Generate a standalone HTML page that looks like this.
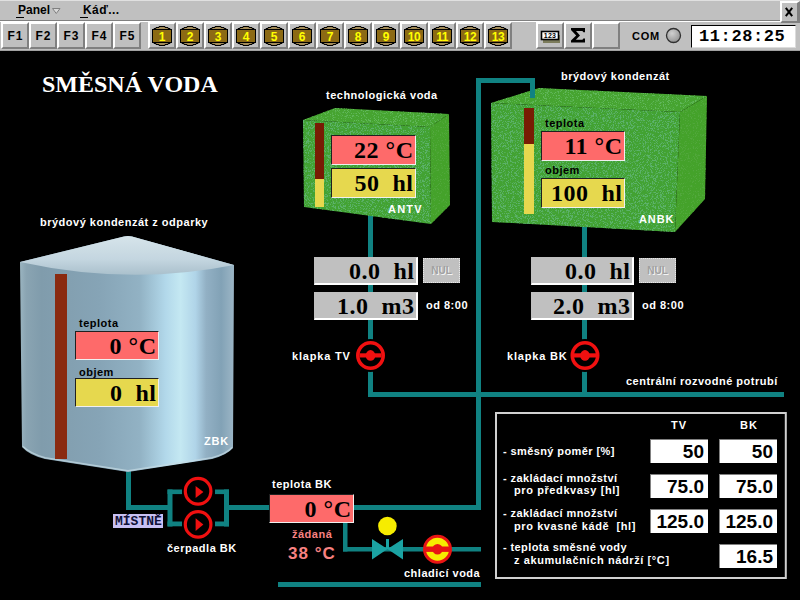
<!DOCTYPE html>
<html><head><meta charset="utf-8">
<style>
*{margin:0;padding:0;box-sizing:border-box}
html,body{width:800px;height:600px;overflow:hidden;background:#000}
body{position:relative;font-family:"Liberation Sans",sans-serif;}
.a{position:absolute}
.menubar{left:0;top:0;width:800px;height:21px;background:#c0c0c0;border-bottom:1px solid #808080;border-top:1px solid #e0e0e0}
.tool{left:0;top:21px;width:800px;height:30px;background:#c0c0c0;border-top:1px solid #fff;border-bottom:1px solid #a0a0a0}
.btn{position:absolute;top:0;height:27px;width:28px;background:#c0c0c0;border-left:2px solid #fff;border-top:2px solid #fff;border-right:2px solid #808080;border-bottom:2px solid #808080;font:bold 12px "Liberation Sans",sans-serif;text-align:center;line-height:25px;color:#000;letter-spacing:1px;text-indent:1px}
.lbl{position:absolute;font:bold 11px "Liberation Sans",sans-serif;color:#fff;white-space:nowrap;line-height:14px;letter-spacing:0.5px}
.blk{color:#000}
.val{position:absolute;font:bold 24px "Liberation Serif",serif;color:#000;white-space:pre;text-align:right;line-height:28px;border-top:1px solid #202020;border-left:1px solid #202020;border-right:1px solid #f0f0f0;border-bottom:1px solid #f0f0f0;padding-right:1.5px;letter-spacing:0.5px}
.gry{line-height:27px}
.red{background:#fe6a6a}
.yel{background:#e6d84e}
.gry{background:#c0c0c0;border-top:1px solid #c0c0c0;border-left:1px solid #c0c0c0;border-right:2px solid #fff;border-bottom:2px solid #fff}
.pipe{position:absolute;background:#108282}
.tb{position:absolute;background:#fff;font:bold 19px "Liberation Sans",sans-serif;color:#000;text-align:right;padding-right:4px;white-space:nowrap;line-height:24px;height:24px;width:58px;border-top:1px solid #808080;border-left:1px solid #808080}
.tl{position:absolute;font:bold 11px "Liberation Sans",sans-serif;color:#fff;white-space:pre;line-height:14px;letter-spacing:0.4px}
</style></head><body>
<!-- menu -->
<div class="a menubar">
  <div class="lbl blk" style="left:18px;top:2px;font-size:12px;letter-spacing:0px">Panel</div>
  <div class="a" style="left:16px;top:16px;width:8px;height:1px;background:#000"></div>
  <svg class="a" style="left:52px;top:7px" width="9" height="7"><path d="M0.5 0.5 H8 L4.25 5.5 Z" fill="#d8d8d8" stroke="#808080" stroke-width="1"/></svg>
  <div class="lbl blk" style="left:83px;top:2px;font-size:12px;letter-spacing:0.4px">Káď...</div>
  <div class="a" style="left:80px;top:16px;width:8px;height:1px;background:#000"></div>
  <div class="a" style="left:780px;top:0;width:20px;height:22px;background:#c0c0c0;border-left:2px solid #fff;border-top:2px solid #fff;border-right:3px solid #808080;border-bottom:2px solid #808080;z-index:3"><svg style="position:absolute;left:2.5px;top:4px" width="10" height="11"><path d="M1.4 1.6 L6.6 8.4 M6.6 1.6 L1.4 8.4" stroke="#000" stroke-width="2" stroke-linecap="square"/></svg></div>
</div>
<div class="a tool">
  <div class="btn" style="left:1px">F1</div>
  <div class="btn" style="left:29px">F2</div>
  <div class="btn" style="left:57px">F3</div>
  <div class="btn" style="left:85px">F4</div>
  <div class="btn" style="left:113px">F5</div>
  <div class="btn" style="left:148px"><svg style="position:absolute;left:0;top:0" width="24" height="24"><path d="M9 2.5 H15 V3.5 H18 V4.5 H20 V5.5 H4 V4.5 H6 V3.5 H9 Z" fill="#a48c58" stroke="#000" stroke-width="1"/><path d="M9 21.5 H15 V20.5 H18 V19.5 H20 V18.5 H4 V19.5 H6 V20.5 H9 Z" fill="#a48c58" stroke="#000" stroke-width="1"/><rect x="2.5" y="5.5" width="19" height="13" fill="#8c6a14" stroke="#000" stroke-width="1"/><text x="12" y="16.5" font-family="Liberation Sans" font-weight="bold" font-size="12" letter-spacing="0" fill="#ffff00" text-anchor="middle">1</text></svg></div>
  <div class="btn" style="left:176px"><svg style="position:absolute;left:0;top:0" width="24" height="24"><path d="M9 2.5 H15 V3.5 H18 V4.5 H20 V5.5 H4 V4.5 H6 V3.5 H9 Z" fill="#a48c58" stroke="#000" stroke-width="1"/><path d="M9 21.5 H15 V20.5 H18 V19.5 H20 V18.5 H4 V19.5 H6 V20.5 H9 Z" fill="#a48c58" stroke="#000" stroke-width="1"/><rect x="2.5" y="5.5" width="19" height="13" fill="#8c6a14" stroke="#000" stroke-width="1"/><text x="12" y="16.5" font-family="Liberation Sans" font-weight="bold" font-size="12" letter-spacing="0" fill="#ffff00" text-anchor="middle">2</text></svg></div>
  <div class="btn" style="left:204px"><svg style="position:absolute;left:0;top:0" width="24" height="24"><path d="M9 2.5 H15 V3.5 H18 V4.5 H20 V5.5 H4 V4.5 H6 V3.5 H9 Z" fill="#a48c58" stroke="#000" stroke-width="1"/><path d="M9 21.5 H15 V20.5 H18 V19.5 H20 V18.5 H4 V19.5 H6 V20.5 H9 Z" fill="#a48c58" stroke="#000" stroke-width="1"/><rect x="2.5" y="5.5" width="19" height="13" fill="#8c6a14" stroke="#000" stroke-width="1"/><text x="12" y="16.5" font-family="Liberation Sans" font-weight="bold" font-size="12" letter-spacing="0" fill="#ffff00" text-anchor="middle">3</text></svg></div>
  <div class="btn" style="left:232px"><svg style="position:absolute;left:0;top:0" width="24" height="24"><path d="M9 2.5 H15 V3.5 H18 V4.5 H20 V5.5 H4 V4.5 H6 V3.5 H9 Z" fill="#a48c58" stroke="#000" stroke-width="1"/><path d="M9 21.5 H15 V20.5 H18 V19.5 H20 V18.5 H4 V19.5 H6 V20.5 H9 Z" fill="#a48c58" stroke="#000" stroke-width="1"/><rect x="2.5" y="5.5" width="19" height="13" fill="#8c6a14" stroke="#000" stroke-width="1"/><text x="12" y="16.5" font-family="Liberation Sans" font-weight="bold" font-size="12" letter-spacing="0" fill="#ffff00" text-anchor="middle">4</text></svg></div>
  <div class="btn" style="left:260px"><svg style="position:absolute;left:0;top:0" width="24" height="24"><path d="M9 2.5 H15 V3.5 H18 V4.5 H20 V5.5 H4 V4.5 H6 V3.5 H9 Z" fill="#a48c58" stroke="#000" stroke-width="1"/><path d="M9 21.5 H15 V20.5 H18 V19.5 H20 V18.5 H4 V19.5 H6 V20.5 H9 Z" fill="#a48c58" stroke="#000" stroke-width="1"/><rect x="2.5" y="5.5" width="19" height="13" fill="#8c6a14" stroke="#000" stroke-width="1"/><text x="12" y="16.5" font-family="Liberation Sans" font-weight="bold" font-size="12" letter-spacing="0" fill="#ffff00" text-anchor="middle">5</text></svg></div>
  <div class="btn" style="left:288px"><svg style="position:absolute;left:0;top:0" width="24" height="24"><path d="M9 2.5 H15 V3.5 H18 V4.5 H20 V5.5 H4 V4.5 H6 V3.5 H9 Z" fill="#a48c58" stroke="#000" stroke-width="1"/><path d="M9 21.5 H15 V20.5 H18 V19.5 H20 V18.5 H4 V19.5 H6 V20.5 H9 Z" fill="#a48c58" stroke="#000" stroke-width="1"/><rect x="2.5" y="5.5" width="19" height="13" fill="#8c6a14" stroke="#000" stroke-width="1"/><text x="12" y="16.5" font-family="Liberation Sans" font-weight="bold" font-size="12" letter-spacing="0" fill="#ffff00" text-anchor="middle">6</text></svg></div>
  <div class="btn" style="left:316px"><svg style="position:absolute;left:0;top:0" width="24" height="24"><path d="M9 2.5 H15 V3.5 H18 V4.5 H20 V5.5 H4 V4.5 H6 V3.5 H9 Z" fill="#a48c58" stroke="#000" stroke-width="1"/><path d="M9 21.5 H15 V20.5 H18 V19.5 H20 V18.5 H4 V19.5 H6 V20.5 H9 Z" fill="#a48c58" stroke="#000" stroke-width="1"/><rect x="2.5" y="5.5" width="19" height="13" fill="#8c6a14" stroke="#000" stroke-width="1"/><text x="12" y="16.5" font-family="Liberation Sans" font-weight="bold" font-size="12" letter-spacing="0" fill="#ffff00" text-anchor="middle">7</text></svg></div>
  <div class="btn" style="left:344px"><svg style="position:absolute;left:0;top:0" width="24" height="24"><path d="M9 2.5 H15 V3.5 H18 V4.5 H20 V5.5 H4 V4.5 H6 V3.5 H9 Z" fill="#a48c58" stroke="#000" stroke-width="1"/><path d="M9 21.5 H15 V20.5 H18 V19.5 H20 V18.5 H4 V19.5 H6 V20.5 H9 Z" fill="#a48c58" stroke="#000" stroke-width="1"/><rect x="2.5" y="5.5" width="19" height="13" fill="#8c6a14" stroke="#000" stroke-width="1"/><text x="12" y="16.5" font-family="Liberation Sans" font-weight="bold" font-size="12" letter-spacing="0" fill="#ffff00" text-anchor="middle">8</text></svg></div>
  <div class="btn" style="left:372px"><svg style="position:absolute;left:0;top:0" width="24" height="24"><path d="M9 2.5 H15 V3.5 H18 V4.5 H20 V5.5 H4 V4.5 H6 V3.5 H9 Z" fill="#a48c58" stroke="#000" stroke-width="1"/><path d="M9 21.5 H15 V20.5 H18 V19.5 H20 V18.5 H4 V19.5 H6 V20.5 H9 Z" fill="#a48c58" stroke="#000" stroke-width="1"/><rect x="2.5" y="5.5" width="19" height="13" fill="#8c6a14" stroke="#000" stroke-width="1"/><text x="12" y="16.5" font-family="Liberation Sans" font-weight="bold" font-size="12" letter-spacing="0" fill="#ffff00" text-anchor="middle">9</text></svg></div>
  <div class="btn" style="left:400px"><svg style="position:absolute;left:0;top:0" width="24" height="24"><path d="M9 2.5 H15 V3.5 H18 V4.5 H20 V5.5 H4 V4.5 H6 V3.5 H9 Z" fill="#a48c58" stroke="#000" stroke-width="1"/><path d="M9 21.5 H15 V20.5 H18 V19.5 H20 V18.5 H4 V19.5 H6 V20.5 H9 Z" fill="#a48c58" stroke="#000" stroke-width="1"/><rect x="2.5" y="5.5" width="19" height="13" fill="#8c6a14" stroke="#000" stroke-width="1"/><text x="12" y="16.5" font-family="Liberation Sans" font-weight="bold" font-size="12" letter-spacing="-0.5" fill="#ffff00" text-anchor="middle">10</text></svg></div>
  <div class="btn" style="left:428px"><svg style="position:absolute;left:0;top:0" width="24" height="24"><path d="M9 2.5 H15 V3.5 H18 V4.5 H20 V5.5 H4 V4.5 H6 V3.5 H9 Z" fill="#a48c58" stroke="#000" stroke-width="1"/><path d="M9 21.5 H15 V20.5 H18 V19.5 H20 V18.5 H4 V19.5 H6 V20.5 H9 Z" fill="#a48c58" stroke="#000" stroke-width="1"/><rect x="2.5" y="5.5" width="19" height="13" fill="#8c6a14" stroke="#000" stroke-width="1"/><text x="12" y="16.5" font-family="Liberation Sans" font-weight="bold" font-size="12" letter-spacing="-0.5" fill="#ffff00" text-anchor="middle">11</text></svg></div>
  <div class="btn" style="left:456px"><svg style="position:absolute;left:0;top:0" width="24" height="24"><path d="M9 2.5 H15 V3.5 H18 V4.5 H20 V5.5 H4 V4.5 H6 V3.5 H9 Z" fill="#a48c58" stroke="#000" stroke-width="1"/><path d="M9 21.5 H15 V20.5 H18 V19.5 H20 V18.5 H4 V19.5 H6 V20.5 H9 Z" fill="#a48c58" stroke="#000" stroke-width="1"/><rect x="2.5" y="5.5" width="19" height="13" fill="#8c6a14" stroke="#000" stroke-width="1"/><text x="12" y="16.5" font-family="Liberation Sans" font-weight="bold" font-size="12" letter-spacing="-0.5" fill="#ffff00" text-anchor="middle">12</text></svg></div>
  <div class="btn" style="left:484px"><svg style="position:absolute;left:0;top:0" width="24" height="24"><path d="M9 2.5 H15 V3.5 H18 V4.5 H20 V5.5 H4 V4.5 H6 V3.5 H9 Z" fill="#a48c58" stroke="#000" stroke-width="1"/><path d="M9 21.5 H15 V20.5 H18 V19.5 H20 V18.5 H4 V19.5 H6 V20.5 H9 Z" fill="#a48c58" stroke="#000" stroke-width="1"/><rect x="2.5" y="5.5" width="19" height="13" fill="#8c6a14" stroke="#000" stroke-width="1"/><text x="12" y="16.5" font-family="Liberation Sans" font-weight="bold" font-size="12" letter-spacing="-0.5" fill="#ffff00" text-anchor="middle">13</text></svg></div>
  <div class="btn" style="left:536px"><svg style="position:absolute;left:0;top:0" width="24" height="24"><rect x="5" y="11" width="17" height="8" fill="#7c7c5c"/><rect x="3.5" y="7.5" width="17" height="8" fill="#fff" stroke="#000" stroke-width="1.6"/><text x="12" y="14.3" font-family="Liberation Sans" font-weight="bold" font-size="7" text-anchor="middle" letter-spacing="0.3">123</text></svg></div>
  <div class="btn" style="left:564px"><svg style="position:absolute;left:0;top:0" width="24" height="24"><path d="M5 4 H19 V8.2 H17.4 L16.4 7 H10 L14 11.4 L9.8 15.8 H16.4 L17.4 14.4 H19 V18.6 H5 V16.6 L10.2 11.4 L5 6 Z" fill="#000"/></svg></div>
  <div class="btn" style="left:592px"></div>
  <div class="lbl blk" style="left:632px;top:7px;font-size:11px;letter-spacing:0.8px">COM</div>
  <svg class="a" style="left:665px;top:5px" width="17" height="17"><defs><radialGradient id="led" cx="0.4" cy="0.35" r="0.7"><stop offset="0" stop-color="#d0d0d0"/><stop offset="1" stop-color="#909090"/></radialGradient></defs><circle cx="8.5" cy="8.5" r="7" fill="url(#led)" stroke="#303030" stroke-width="1.3"/></svg>
  <div class="a" style="left:691px;top:3px;width:105px;height:23px;background:#fff;border-top:1px solid #000;border-left:1px solid #000;border-right:1px solid #dcdcdc;border-bottom:1px solid #dcdcdc;font:bold 17px 'Liberation Mono',monospace;line-height:21px;padding-left:7px;letter-spacing:0.6px;color:#000">11:28:25</div>
</div>

<!-- title -->
<div class="a" style="left:42px;top:71px;font:bold 24px 'Liberation Serif',serif;color:#fff;white-space:nowrap;line-height:26px">SMĚSNÁ VODA</div>

<svg class="a" style="left:0;top:0" width="800" height="600">
  <defs>
    <linearGradient id="silo" x1="0" x2="1" y1="0" y2="0">
      <stop offset="0" stop-color="#9ab4c0"/>
      <stop offset="0.03" stop-color="#8aa4b2"/>
      <stop offset="0.1" stop-color="#809cac"/>
      <stop offset="0.37" stop-color="#86a4b6"/>
      <stop offset="0.56" stop-color="#92b2c4"/>
      <stop offset="0.68" stop-color="#b2d8ea"/>
      <stop offset="0.75" stop-color="#c4e8f2"/>
      <stop offset="0.82" stop-color="#b0d4e8"/>
      <stop offset="0.87" stop-color="#92b0c4"/>
      <stop offset="0.94" stop-color="#82a2b6"/>
      <stop offset="1" stop-color="#9cb6c6"/>
    </linearGradient>
    <linearGradient id="cone" x1="0" x2="0" y1="0" y2="1">
      <stop offset="0" stop-color="#d6e4ea"/>
      <stop offset="0.6" stop-color="#c4d6e0"/>
      <stop offset="1" stop-color="#aac0cc"/>
    </linearGradient>
    <filter id="texF" x="0" y="0" width="100%" height="100%" color-interpolation-filters="sRGB">
      <feTurbulence type="fractalNoise" baseFrequency="1.6" numOctaves="1" seed="2" result="n"/>
      <feColorMatrix in="n" type="matrix" values="0 0 0 0 0.36  0 0 0 0 0.70  0 0 0 0 0.42  0 0 0 9 -4.6" result="dots"/>
      <feComposite in="dots" in2="SourceGraphic" operator="in" result="d2"/>
      <feMerge><feMergeNode in="SourceGraphic"/><feMergeNode in="d2"/></feMerge>
    </filter>
    <filter id="texT" x="0" y="0" width="100%" height="100%" color-interpolation-filters="sRGB">
      <feTurbulence type="fractalNoise" baseFrequency="1.6" numOctaves="1" seed="5" result="n"/>
      <feColorMatrix in="n" type="matrix" values="0 0 0 0 0.38  0 0 0 0 0.72  0 0 0 0 0.36  0 0 0 9 -4.9" result="dots"/>
      <feComposite in="dots" in2="SourceGraphic" operator="in" result="d2"/>
      <feMerge><feMergeNode in="SourceGraphic"/><feMergeNode in="d2"/></feMerge>
    </filter>
    <filter id="texR" x="0" y="0" width="100%" height="100%" color-interpolation-filters="sRGB">
      <feTurbulence type="fractalNoise" baseFrequency="1.6" numOctaves="1" seed="9" result="n"/>
      <feColorMatrix in="n" type="matrix" values="0 0 0 0 0.32  0 0 0 0 0.66  0 0 0 0 0.24  0 0 0 9 -5.0" result="dots"/>
      <feComposite in="dots" in2="SourceGraphic" operator="in" result="d2"/>
      <feMerge><feMergeNode in="SourceGraphic"/><feMergeNode in="d2"/></feMerge>
    </filter>
  </defs>
  <!-- pipes -->
  <g fill="#108282">
    <rect x="476" y="78" width="5" height="431"/>
    <rect x="476" y="78" width="59" height="5"/>
    <rect x="530" y="78" width="5" height="22"/>
    <rect x="368" y="212" width="5" height="185"/>
    <rect x="582" y="225" width="5" height="172"/>
    <rect x="368" y="392" width="416" height="5"/>
    <rect x="229" y="505" width="252" height="5"/>
    <rect x="228" y="505" width="2" height="5"/>
    <rect x="126" y="468" width="5" height="41"/>
    <rect x="126" y="505" width="46" height="5"/>
    <rect x="167.5" y="489.5" width="5" height="37"/>
    <rect x="167.5" y="489.5" width="14.5" height="4.6"/>
    <rect x="167.5" y="521.5" width="14.5" height="4.8"/>
    <rect x="224" y="489.5" width="5" height="37"/>
    <rect x="215" y="489.5" width="14" height="4.6"/>
    <rect x="215" y="521.5" width="14" height="4.8"/>
    <rect x="343" y="520" width="4.5" height="31.5"/>
    <rect x="343" y="547" width="138" height="4.5"/>
    <rect x="278" y="582" width="203" height="5"/>
  </g>
  <!-- silo -->
  <path d="M20 262 L124 236.5 Q128 235.5 132 236.5 L234 265 L233 448 Q227 455 212 459 L128 472 L45 459 Q29 455 22 447 Z" fill="url(#silo)"/>
  <path d="M23 446.5 Q30 453.5 45 457.8 L128 470.8 L212 457.8 Q226 454 232 447.5" fill="none" stroke="#c6dbe4" stroke-width="1.6" opacity="0.7"/>
  <path d="M20 262 L124 236.5 Q128 235.5 132 236.5 L234 265 Q130 286 20 262 Z" fill="url(#cone)"/>
  <rect x="55" y="274" width="12" height="185" fill="#8a2a10"/>
  <!-- ANTV tank -->
  <g>
  <path d="M303 120 L335 108 L449 114 L430 127 Z" fill="#46a430" filter="url(#texT)"/>
  <path d="M303 120 L430 127 L431 224 L304 207 Z" fill="#42a232" filter="url(#texF)"/>
  <path d="M430 127 L449 114 L450 205 L431 224 Z" fill="#44a22a" filter="url(#texR)"/>
  </g>
  <rect x="315" y="123" width="9" height="56" fill="#781c04"/>
  <rect x="315" y="179" width="9" height="28" fill="#e6d84e"/>
  <!-- ANBK tank -->
  <g>
  <path d="M491 103 L539 88 L707 96 L680 112 Z" fill="#46a430" filter="url(#texT)"/>
  <path d="M491 103 L680 112 L675 232 L492 222 Z" fill="#42a232" filter="url(#texF)"/>
  <path d="M680 112 L707 96 L705 199 L675 232 Z" fill="#44a22a" filter="url(#texR)"/>
  </g>
  <rect x="530" y="82" width="5" height="16" fill="#108282"/>
  <rect x="524" y="108" width="10" height="36" fill="#781c04"/>
  <rect x="524" y="144" width="10" height="70" fill="#e6d84e"/>
  <!-- klapka valves -->
  <g>
    <circle cx="370.5" cy="355.5" r="16.5" fill="#000"/>
    <circle cx="370.5" cy="355.5" r="12.7" fill="#000" stroke="#f01010" stroke-width="3.6"/>
    <rect x="359.5" y="353.3" width="22" height="4.2" fill="#f01010"/>
    <ellipse cx="370.5" cy="355.4" rx="4.8" ry="5.3" fill="#f01010"/>
  </g>
  <g>
    <circle cx="585" cy="355.5" r="16.5" fill="#000"/>
    <circle cx="585" cy="355.5" r="12.7" fill="#000" stroke="#f01010" stroke-width="3.6"/>
    <rect x="574" y="353.3" width="22" height="4.2" fill="#f01010"/>
    <ellipse cx="585" cy="355.4" rx="4.8" ry="5.3" fill="#f01010"/>
  </g>
  <!-- pumps -->
  <g>
    <circle cx="198.1" cy="491.25" r="12.8" fill="#000" stroke="#f01010" stroke-width="3.2"/>
    <path d="M195.6 486 L203.4 492 L195.6 498 Z" fill="#f01010"/>
    <circle cx="198.1" cy="524.4" r="12.8" fill="#000" stroke="#f01010" stroke-width="3.2"/>
    <path d="M195.6 518.2 L203.4 524.6 L195.6 531 Z" fill="#f01010"/>
  </g>
  <!-- cooling valve -->
  <circle cx="387.4" cy="526" r="9.3" fill="#f6ec00"/>
  <rect x="386" y="539" width="3" height="10" fill="#1ba3a3"/>
  <path d="M372 539 L387.5 549 L372 559.5 Z M403 539 L387.5 549 L403 559.5 Z" fill="#1ba3a3"/>
  <g>
    <circle cx="437.5" cy="549.2" r="13" fill="#f6ec00" stroke="#e81414" stroke-width="3"/>
    <rect x="425" y="546.5" width="25" height="5.4" fill="#e81414"/>
    <ellipse cx="437.5" cy="549.2" rx="5.2" ry="5.2" fill="#e81414"/>
  </g>
  <!-- table border -->
  <rect x="496" y="413" width="289.8" height="165" fill="none" stroke="#d0d0d0" stroke-width="2"/>
</svg>

<!-- labels -->
<div class="lbl" style="left:326px;top:88px">technologická voda</div>
<div class="lbl" style="left:561px;top:69px">brýdový kondenzát</div>
<div class="lbl" style="left:40px;top:215px">brýdový kondenzát z odparky</div>
<div class="lbl" style="left:626px;top:374px">centrální rozvodné potrubí</div>
<div class="lbl" style="left:388px;top:202px;letter-spacing:1.2px">ANTV</div>
<div class="lbl" style="left:639px;top:212px;letter-spacing:0.9px">ANBK</div>
<div class="lbl" style="left:204px;top:434px;letter-spacing:0.8px">ZBK</div>
<div class="lbl" style="left:292px;top:349px;letter-spacing:0.8px">klapka TV</div>
<div class="lbl" style="left:507px;top:349px;letter-spacing:0.8px">klapka BK</div>
<div class="lbl" style="left:426px;top:298px">od 8:00</div>
<div class="lbl" style="left:642px;top:298px">od 8:00</div>
<div class="lbl" style="left:167px;top:541px">čerpadla BK</div>
<div class="lbl" style="left:272px;top:477px">teplota BK</div>
<div class="lbl" style="left:292px;top:527px;color:#f88282">žádaná</div>
<div class="lbl" style="left:288px;top:544px;color:#f88282;font-size:17px;line-height:20px;letter-spacing:1px">38 °C</div>
<div class="lbl" style="left:404px;top:566px">chladicí voda</div>
<div class="a" style="left:113px;top:514px;width:50px;height:14px;background:#c8c0f4;font:bold 13px 'Liberation Mono',monospace;color:#101038;line-height:16px;padding-left:2px;letter-spacing:0px;white-space:nowrap">MÍSTNĚ</div>

<!-- readouts in tanks -->
<div class="lbl blk" style="left:545px;top:116px">teplota</div>
<div class="val red" style="left:541px;top:131px;width:84px;height:30px">11 °C</div>
<div class="lbl blk" style="left:545px;top:163px">objem</div>
<div class="val yel" style="left:541px;top:178px;width:84px;height:30px">100  hl</div>

<div class="val red" style="left:331px;top:135px;width:85px;height:30px">22 °C</div>
<div class="val yel" style="left:331px;top:168px;width:85px;height:30px">50  hl</div>

<div class="lbl blk" style="left:79px;top:316px">teplota</div>
<div class="val red" style="left:75px;top:331px;width:84px;height:29px">0 °C</div>
<div class="lbl blk" style="left:79px;top:365px">objem</div>
<div class="val yel" style="left:75px;top:378px;width:84px;height:29px">0  hl</div>

<div class="val red" style="left:269px;top:494px;width:85px;height:29px">0 °C</div>

<!-- counters -->
<div class="val gry" style="left:314px;top:257px;width:104px;height:28px">0.0  hl</div>
<div class="val gry" style="left:314px;top:292px;width:104px;height:28px">1.0  m3</div>
<div class="val gry" style="left:531px;top:257px;width:103px;height:28px">0.0  hl</div>
<div class="val gry" style="left:531px;top:292px;width:103px;height:28px">2.0  m3</div>
<div class="a" style="left:423px;top:258px;width:37px;height:25px;background:#c0c0c0;border:1px dotted #e8e8e8;font:bold 10px 'Liberation Sans';color:#a0a0a0;text-shadow:1px 1px 0 #f4f4f4;text-align:center;line-height:23px">NUL</div>
<div class="a" style="left:639px;top:258px;width:37px;height:25px;background:#c0c0c0;border:1px dotted #e8e8e8;font:bold 10px 'Liberation Sans';color:#a0a0a0;text-shadow:1px 1px 0 #f4f4f4;text-align:center;line-height:23px">NUL</div>

<!-- table -->
<div class="lbl" style="left:671px;top:418px;letter-spacing:1px">TV</div>
<div class="lbl" style="left:740px;top:418px;letter-spacing:1px">BK</div>
<div class="tl" style="left:503px;top:444px">- směsný poměr [%]</div>
<div class="tl" style="left:503px;top:471px">- zakládací množství</div>
<div class="tl" style="left:503px;top:483px;letter-spacing:0.6px">   pro předkvasy [hl]</div>
<div class="tl" style="left:503px;top:506px">- zakládací množství</div>
<div class="tl" style="left:503px;top:518.5px;letter-spacing:0.6px">   pro kvasné kádě  [hl]</div>
<div class="tl" style="left:503px;top:540px">- teplota směsné vody</div>
<div class="tl" style="left:503px;top:552.5px;letter-spacing:0.6px">   z akumulačních nádrží [°C]</div>
<div class="tb" style="left:650px;top:439px">50</div>
<div class="tb" style="left:719px;top:439px">50</div>
<div class="tb" style="left:650px;top:474px">75.0</div>
<div class="tb" style="left:719px;top:474px">75.0</div>
<div class="tb" style="left:650px;top:509px">125.0</div>
<div class="tb" style="left:719px;top:509px">125.0</div>
<div class="tb" style="left:719px;top:544px">16.5</div>

</body></html>
